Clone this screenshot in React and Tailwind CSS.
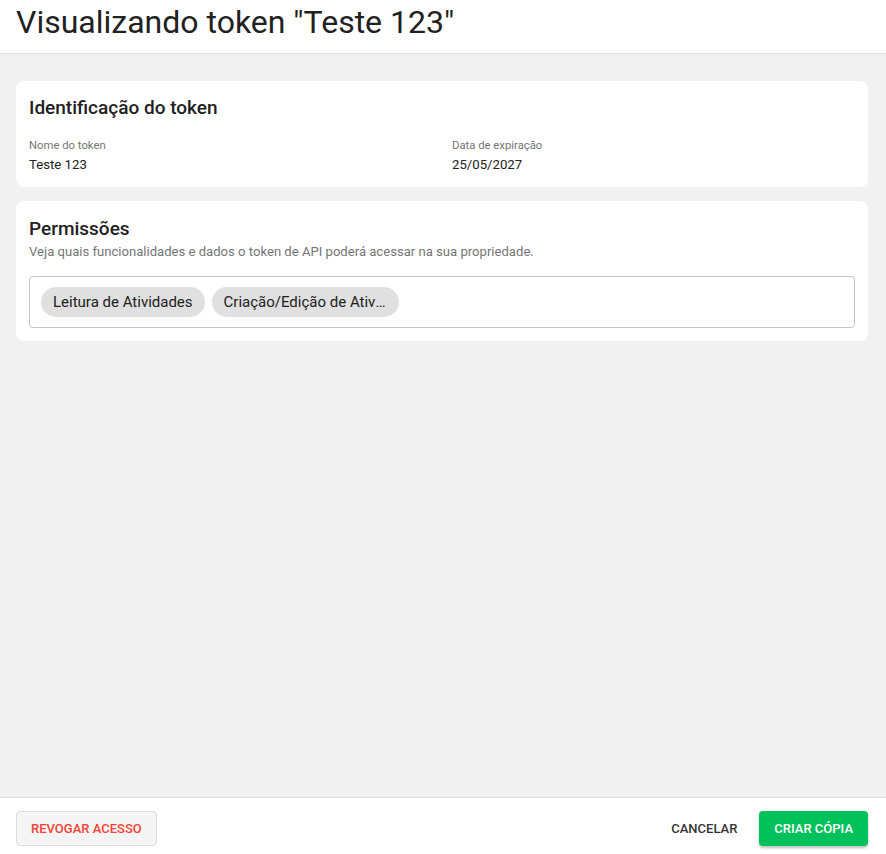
export default function App() {
  const permissions = ["Leitura de Atividades", "Criação/Edição de Atividades"];

  return (
    <div className="flex h-screen flex-col bg-[#f1f1f1] text-[#212121] [font-family:Roboto,'Liberation_Sans',sans-serif]">
      {/* Header */}
      <header className="h-[54px] shrink-0 border-b border-[#e0e0e0] bg-white px-4">
        <h1 className="pt-[2px] text-[32px] leading-[40px]">Visualizando token "Teste 123"</h1>
      </header>

      {/* Content */}
      <main className="flex flex-1 flex-col gap-[14px] overflow-auto pl-4 pr-[18px] pt-[27px]">
        <section className="rounded-lg bg-white px-[13px] pb-[14px] pt-[15px]">
          <h2 className="text-[19px] font-medium leading-6">Identificação do token</h2>
          <div className="mt-[19px] grid grid-cols-2 gap-5">
            <div>
              <div className="text-[11.3px] leading-[14px] text-[#757575]">Nome do token</div>
              <div className="mt-[4px] text-[13.2px] leading-4">Teste 123</div>
            </div>
            <div>
              <div className="text-[11.3px] leading-[14px] text-[#757575]">Data de expiração</div>
              <div className="mt-[4px] text-[13.2px] leading-4">25/05/2027</div>
            </div>
          </div>
        </section>

        <section className="rounded-lg bg-white px-[13px] pb-[13px] pt-[16px]">
          <h2 className="text-[19px] font-medium leading-6">Permissões</h2>
          <p className="mt-[3px] text-[13.1px] leading-4 text-[#757575]">
            Veja quais funcionalidades e dados o token de API poderá acessar na sua propriedade.
          </p>
          <div className="mt-[16px] flex h-[52px] items-center gap-[7px] rounded border border-[#c4c4c4] px-[11px]">
            {permissions.map((p) => (
              <span
                key={p}
                className="flex h-[30px] max-w-[187px] items-center rounded-full bg-[#e0e0e0] px-3 text-[15px]"
              >
                <span className="truncate">{p}</span>
              </span>
            ))}
          </div>
        </section>
      </main>

      {/* Footer */}
      <footer className="flex h-[57px] shrink-0 items-start border-t border-[#e0e0e0] bg-white pl-4 pr-[18px] pt-[13px]">
        <button className="h-[35px] rounded border border-[#dcdcdc] bg-[#f5f5f5] px-[14px] text-[13px] font-medium text-[#f44336]">
          REVOGAR ACESSO
        </button>
        <div className="ml-auto flex items-center gap-[10px]">
          <button className="h-[35px] px-3 text-[13px] font-medium text-[#333]">CANCELAR</button>
          <button className="h-[35px] rounded bg-[#00c15a] px-[15px] text-[13px] font-medium text-white shadow-[0_2px_3px_rgba(0,0,0,0.25)]">
            CRIAR CÓPIA
          </button>
        </div>
      </footer>
    </div>
  );
}
